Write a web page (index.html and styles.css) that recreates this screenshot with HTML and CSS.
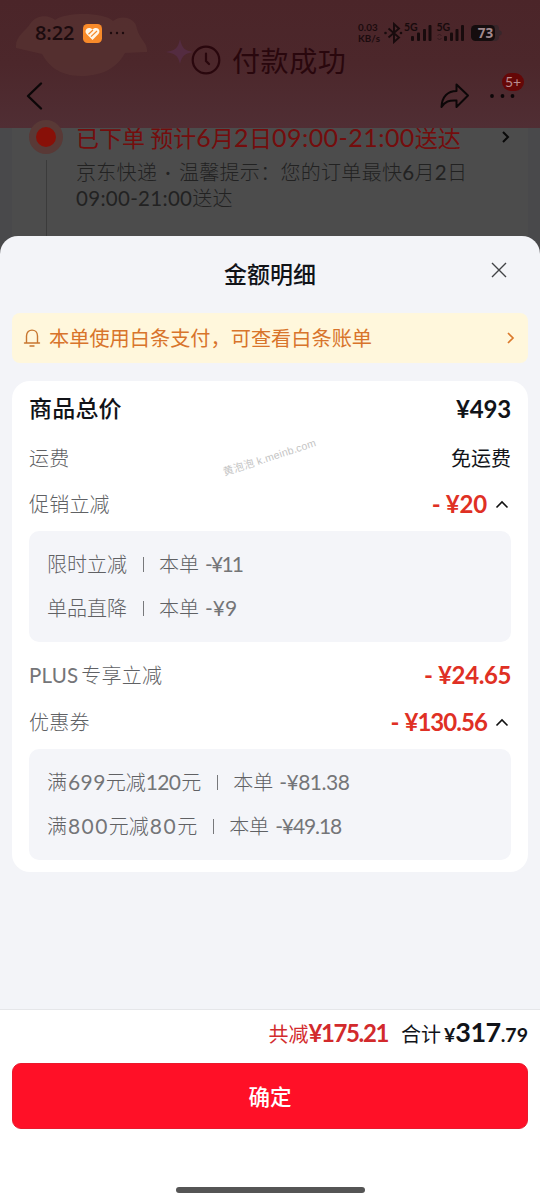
FILE: index.html
```html
<!DOCTYPE html>
<html lang="zh-CN">
<head>
<meta charset="utf-8">
<title>金额明细</title>
<link rel="stylesheet" href="styles.css">
</head>
<body>
<div class="screen">
  <header class="header">
    <svg class="header-art" width="200" height="80" viewBox="0 0 200 80">
      <path d="M16 48C15 36 25 32 30 24C38 12 52 17 55 20C66 12 104 12 113 21C122 14 136 18 137 29C140 40 148 43 147 52L125 53C116 70 99 76 81 76C59 76 48 65 42 54Z" fill="#5a3533"/>
      <path d="M180 39C182 48 184 50 193 52C184 54 182 56 180 64C178 56 176 54 166 52C176 50 178 48 180 39Z" fill="#5a3050"/>
    </svg>
    <div class="status">
      <span class="clock">8:22</span>
      <svg class="health" width="19" height="19" viewBox="0 0 19 19"><rect width="19" height="19" rx="4.5" fill="#f88a2a"/><path d="M9.5 16L3.6 10C.5 6.2 5 1.400 9.500 5.500C14 1.400 18.500 6.200 15.400 10Z" fill="#fff6e8"/><path d="M5.500 10.200L10 6M8 12.600L14 7" stroke="#f88a2a" stroke-width="1.200" fill="none"/></svg>
      <svg class="dots" width="16" height="4" viewBox="0 0 16 4" fill="#1d0b0e"><circle cx="2" cy="2" r="1.200"/><circle cx="8" cy="2" r="1.200"/><circle cx="14" cy="2" r="1.200"/></svg>
      <span class="speed"><span>0.03</span><span>KB/s</span></span>
      <svg class="radio" width="149" height="22" viewBox="0 0 149 22">
        <path d="M5.500 6.500L16 15.500L11 20V2L16 6.500L5.500 15.500" fill="none" stroke="#180b0d" stroke-width="1.900"/>
        <circle cx="2.500" cy="11" r="1.300" fill="#180b0d"/><circle cx="18" cy="11" r="1.300" fill="#180b0d"/>
        <g fill="#180b0d"><rect x="28" y="14" width="3" height="5" rx="1"/><rect x="34" y="10.500" width="3" height="8.500" rx="1"/><rect x="40" y="7" width="3" height="12" rx="1"/><rect x="45.500" y="3" width="3" height="16" rx="1"/><rect x="61" y="14" width="3" height="5" rx="1"/><rect x="67" y="10.500" width="3" height="8.500" rx="1"/><rect x="72.500" y="7" width="3" height="12" rx="1"/><rect x="78" y="3" width="3" height="16" rx="1"/></g>
        <text x="21" y="8.700" class="net">5G</text><text x="53.500" y="8.700" class="net">5G</text>
        <path d="M54.500 14L56.500 12L58.500 14M54.500 16L56.500 18L58.500 16" fill="none" stroke="#33191d"/>
        <path d="M108 3H113Q116 3 116 7V8Q119 9 119 11Q119 13 116 14V15Q116 19 112 19H108Z" fill="#38262a"/>
        <rect x="88" y="3" width="24" height="16" rx="4.500" fill="#150d0e"/>
        <text x="102.500" y="15.800" text-anchor="middle" class="battery">73</text>
      </svg>
    </div>
    <div class="paid">
      <svg width="30" height="30" viewBox="0 0 30 30" fill="none" stroke="#29070d" stroke-width="2.200" stroke-linecap="round"><circle cx="15" cy="15" r="13.300"/><path d="M15 8.500V16L18 19"/></svg>
      <span>付款成功</span>
    </div>
    <svg class="back" width="18" height="30" viewBox="0 0 18 30" fill="none" stroke="#0c0708" stroke-width="2.400" stroke-linecap="round" stroke-linejoin="round"><path d="M16 2.500L3 15L16 27.500"/></svg>
    <svg class="share" width="30" height="27" viewBox="0 0 30 27" fill="none" stroke="#0c0708" stroke-width="2" stroke-linejoin="round"><path d="M16.500 1.500L28 12.500L16.500 24V17.500C9 17 5 18.500 1.500 24C2 13.500 8 8 16.500 8Z"/></svg>
    <svg class="more" width="28" height="6" viewBox="0 0 28 6" fill="#0c0708"><circle cx="3" cy="3" r="1.900"/><circle cx="13.500" cy="3" r="1.900"/><circle cx="23.500" cy="3" r="1.900"/></svg>
    <span class="badge">5+</span>
  </header>

  <section class="order">
    <div class="rail"><i class="pulse"></i><i class="line"></i></div>
    <div class="delivery">
      <div class="eta"><span>已下单 预计<b>6</b>月<b>2</b>日<b>09:00-21:00</b>送达</span>
        <svg width="10" height="14" viewBox="0 0 10 14" fill="none" stroke="#090909" stroke-width="2"><path d="M2 2L7 7L2 12"/></svg>
      </div>
      <div class="tip">京东快递<b class="dot"> · </b>温馨提示：您的订单最快<b>6</b>月<b>2</b>日</div>
      <div class="tip tip-time"><b>09:00-21:00</b>送达</div>
    </div>
  </section>

  <main class="sheet">
    <div class="title"><h1>金额明细</h1>
      <svg class="close" width="18" height="18" viewBox="0 0 18 18" stroke="#414246" stroke-width="1.400"><path d="M2 2L16 16M16 2L2 16"/></svg>
    </div>
    <div class="notice">
      <svg width="18" height="20" viewBox="0 0 18 20" fill="none" stroke="#c7762f" stroke-width="1.400" stroke-linecap="round" stroke-linejoin="round"><path d="M3.500 15V8C3.500 .2 14.500 .2 14.500 8V15M1.500 15H16.500M7 18H11"/></svg>
      <span>本单使用白条支付，可查看白条账单</span>
      <svg class="notice-arrow" width="9" height="14" viewBox="0 0 9 14" fill="none" stroke="#db7a2c" stroke-width="1.700"><path d="M2 2L7 7L2 12"/></svg>
    </div>

    <div class="card">
      <div class="row row-total"><span>商品总价</span><strong class="price dark">¥493</strong></div>
      <div class="row row-freight"><span>运费</span><span class="free">免运费</span></div>
      <div class="row row-open"><span>促销立减</span><strong class="price"><i>-</i>¥20</strong><svg class="fold" width="14" height="9" viewBox="0 0 14 9"><path d="M1.500 7.500L7 2L12.500 7.500"/></svg></div>
      <div class="detail">
        <div>限时立减<em></em>本单<b class="amount elevens">-¥11</b></div>
        <div>单品直降<em></em>本单<b class="amount">-¥9</b></div>
      </div>
      <div class="row row-plus"><span><b class="plus">PLUS</b>专享立减</span><strong class="price p-plus"><i>-</i>¥24.65</strong></div>
      <div class="row row-open"><span>优惠券</span><strong class="price p-coupon"><i>-</i>¥130.56</strong><svg class="fold" width="14" height="9" viewBox="0 0 14 9"><path d="M1.500 7.500L7 2L12.500 7.500"/></svg></div>
      <div class="detail">
        <div>满<b class="n699">699</b>元减<b class="n120">120</b>元<em></em>本单<b class="amount a8138">-¥81.38</b></div>
        <div>满<b class="n800">800</b>元减<b class="n80">80</b>元<em></em>本单<b class="amount a4918">-¥49.18</b></div>
      </div>
      <span class="watermark">黄泡泡 k.meinb.com</span>
    </div>

    <footer class="footer">
      <div class="totals"><span class="saved">共减</span><strong class="saved-num">¥175.21</strong><span class="sum">合计</span><strong class="pay"><small class="yen">¥</small>317<small>.79</small></strong></div>
      <button class="confirm">确定</button>
      <div class="home"></div>
    </footer>
  </main>
</div>
</body>
</html>
```
FILE: styles.css
```css
* { box-sizing: border-box; }
body { margin: 0; font-family: "Noto Sans CJK SC", sans-serif; }
h1, i, em { font-style: normal; margin: 0; }
svg { display: block; flex: none; }
b, .price, .pay, .saved-num { font-family: Lato, "Noto Sans CJK SC", sans-serif; }
b { font-weight: 400; }

.screen { position: relative; width: 540px; height: 1201px; overflow: hidden; background: #49494b; white-space: nowrap; font-weight: 300; }

.header { position: relative; height: 128px; background: linear-gradient(#4b2529, #4c272b 50%, #502e34); }
.header-art { position: absolute; left: 0; top: 0; opacity: .6; }
.status { position: relative; display: flex; align-items: center; height: 44px; padding: 21px 0 0 35px; color: #1b0b0e; }
.clock { width: 48px; font: 600 20px/22px "Open Sans", sans-serif; letter-spacing: -.1px; }
.health { margin-top: 1px; }
.dots { margin-left: 7px; }
.speed { display: flex; flex-direction: column; margin-left: 233px; width: 25px; font: 700 9.800px/11px Lato, sans-serif; letter-spacing: .1px; }
.radio { width: 149px; }
.net { font: 700 10.500px Lato, sans-serif; fill: #180b0d; }
.battery { font: 700 13.500px "Open Sans", sans-serif; fill: #a1898d; }
.paid { position: absolute; left: 191px; top: 43px; display: flex; align-items: center; gap: 11px; height: 33px; color: #29070d; font-size: 28px; font-weight: 400; letter-spacing: .6px; }
.back { position: absolute; left: 25px; top: 81px; }
.share { position: absolute; left: 440px; top: 83px; }
.more { position: absolute; left: 489px; top: 93px; }
.badge { position: absolute; left: 502px; top: 73px; width: 22px; height: 18px; border-radius: 9px; background: #650707; color: #b98d90; font: 14px/18px Lato, sans-serif; text-align: center; }

.order { display: flex; height: 130px; margin: 0 12px; background: #4c4c4c; }
.rail { display: flex; flex-direction: column; align-items: center; width: 68px; }
.pulse { width: 34px; height: 34px; margin-top: -8px; border-radius: 50%; border: 7px solid #593936; background: #881008; position: relative; flex: none; }
.line { width: 1px; height: 90px; margin-top: 6px; margin-left: 1px; background: #3b3b3b; }
.delivery { flex: 1; margin-left: -4px; }
.eta { display: flex; justify-content: space-between; align-items: center; height: 30px; margin-top: -6px; padding-right: 17px; color: #740d0d; font-size: 23px; line-height: 30px; font-weight: 400; clip-path: inset(6px 0 0 0); }
.eta b { font-size: 25px; letter-spacing: .45px; }
.tip { height: 26px; margin-top: 7px; color: #222; font-size: 20px; line-height: 26px; letter-spacing: .3px; }
.tip b { font-size: 20.500px; white-space: pre; }
.tip .dot { margin: 0 2.500px; }
.tip-time { margin-top: 0; }

.sheet { position: absolute; left: 0; top: 236px; width: 540px; height: 965px; display: flex; flex-direction: column; border-radius: 18px 18px 0 0; background: #f3f4f8; }
.title { display: flex; justify-content: center; height: 77px; padding-top: 22px; color: #111318; }
h1 { font-size: 23px; line-height: 30px; font-weight: 500; }
.close { position: absolute; right: 32px; top: 25px; }
.notice { display: flex; align-items: center; height: 50px; margin: 0 12px; padding: 0 13px 0 11px; border-radius: 8px; background: #fff7dc; color: #d8742b; font-size: 20.200px; font-weight: 400; }
.notice span { margin-left: 8px; line-height: 30px; }
.notice-arrow { margin-left: auto; }

.card { position: relative; height: 491px; margin: 18px 12px 0; padding: 0 17px; border-radius: 18px; background: #fff; color: #606164; font-size: 20px; }
.card b { color: #747578; }
.row { display: flex; align-items: center; height: 48px; line-height: 30px; }
.row > span:first-child { margin-right: auto; letter-spacing: .2px; }
.row-total { height: 54px; color: #111318; font-size: 23px; font-weight: 500; }
.row-total > span { position: relative; top: -1px; }
.row-freight { height: 45px; }
.row-plus { height: 46px; margin-top: 10px; }
.free { color: #111318; font-weight: 400; }
.price { color: #df3024; font-size: 24px; font-weight: 700; letter-spacing: -.2px; }
.price i { display: inline-block; width: 14px; font-weight: 700; }
.p-plus { letter-spacing: -.4px; }
.p-coupon { letter-spacing: -.95px; }
.dark { padding-top: 2px; color: #111318; }
.fold { margin: 0 2px 0 8px; fill: none; stroke: #111; stroke-width: 1.600; }
.detail { height: 111px; margin-top: 3px; padding: 11px 18px; border-radius: 10px; background: #f4f5f9; line-height: 44px; }
.detail em { display: inline-block; width: 1px; height: 15px; margin: 0 15px 0 16px; background: #77787b; }
.detail b { font-size: 21px; }
.detail .amount { margin-left: 6px; }
.detail .elevens { letter-spacing: -1.800px; }
.n699 { letter-spacing: .4px; margin-left: 1px; }
.n120 { letter-spacing: -.7px; margin-right: 1px; }
.n800 { letter-spacing: 1.400px; margin-left: 1px; }
.n80 { letter-spacing: 1.500px; margin-left: 1px; }
.a8138 { letter-spacing: -.5px; }
.a4918 { letter-spacing: -1.100px; }
.plus { font-size: 20.500px; margin-right: 3px; }
.watermark { position: absolute; left: 209px; top: 66px; font: 10.500px/20px "Liberation Sans", "Noto Sans CJK SC", sans-serif; letter-spacing: .2px; color: #c4c4c4; transform: rotate(-18deg); }

.footer { height: 192px; margin-top: auto; padding: 0 12px; border-top: 1px solid #e5e6e9; background: #fff; }
.totals { display: flex; justify-content: flex-end; align-items: baseline; height: 53px; line-height: 44px; font-size: 20px; font-weight: 400; color: #111318; }
.saved, .saved-num { color: #d22a2c; }
.saved-num { font-size: 24px; letter-spacing: -1.400px; }
.sum { margin-left: 13px; }
.pay { font-size: 27px; margin-left: 3px; letter-spacing: -.5px; }
.pay small { font-size: 19.500px; letter-spacing: 0; }
.confirm { display: block; width: 100%; height: 66px; padding: 0; border: 1px solid #e91a2d; border-radius: 9px; background: #ff1027; color: #fff; font: 500 21.500px/62px "Noto Sans CJK SC", sans-serif; }
.home { width: 189px; height: 6px; margin: 58px auto 0; border-radius: 3px; background: #555; }
```
